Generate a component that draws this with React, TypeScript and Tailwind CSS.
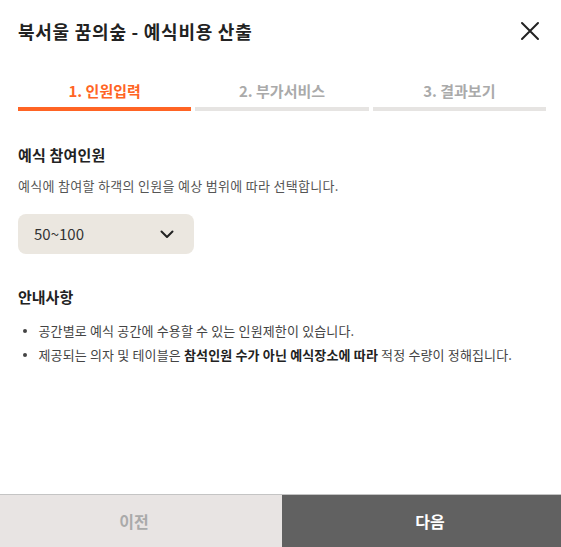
import React from "react";

export default function App() {
  const font = { fontFamily: '"Noto Sans CJK KR", "Noto Sans", sans-serif' };
  return (
    <div className="w-[561px] h-[547px] bg-white flex flex-col" style={font}>
      <div className="h-[62px] flex items-center justify-between pl-[18px] pr-[21px]">
        <h1 className="text-[18px] font-bold text-[#222] leading-none tracking-[0.75px]">북서울 꿈의숲 - 예식비용 산출</h1>
        <svg width="20" height="20" viewBox="0 0 20 20" fill="none" stroke="#222" strokeWidth="2" strokeLinecap="round">
          <path d="M2 2 L18 18 M18 2 L2 18" />
        </svg>
      </div>
      <div className="flex gap-[4px] pl-[18px] pr-[15px] pt-[19px]">
        {[
          ["1. 인원입력", true],
          ["2. 부가서비스", false],
          ["3. 결과보기", false],
        ].map(([label, active]) => (
          <div key={label as string} className="flex-1 flex flex-col items-center gap-[6px]">
            <span className={`text-[15px] leading-[20px] font-bold ${active ? "text-[#ff6424]" : "text-[#aaaaaa]"}`}>{label}</span>
            <div className={`w-full h-[4px] ${active ? "bg-[#ff6424]" : "bg-[#e6e4e2]"}`} />
          </div>
        ))}
      </div>
      <div className="px-[18px] pt-[33px] flex-1">
        <h2 className="text-[15px] font-bold text-[#222] leading-[22px] tracking-[0.2px]">예식 참여인원</h2>
        <p className="mt-[10px] text-[13px] text-[#555] leading-[20px] tracking-[0.3px]">예식에 참여할 하객의 인원을 예상 범위에 따라 선택합니다.</p>
        <div className="mt-[18px] w-[176px] h-[40px] rounded-[8px] bg-[#ebe7e0] flex items-center justify-between pl-[16px] pr-[20px]">
          <span className="text-[15px] text-[#333]">50~100</span>
          <svg width="14" height="9" viewBox="0 0 14 9" fill="none" stroke="#222" strokeWidth="2" strokeLinecap="round" strokeLinejoin="round">
            <path d="M1.5 1.5 L7 7 L12.5 1.5" />
          </svg>
        </div>
        <h2 className="mt-[32px] text-[15px] font-bold text-[#222] leading-[22px]">안내사항</h2>
        <ul className="mt-[13px] flex flex-col gap-[4px] text-[13px] text-[#444] leading-[20px] tracking-[0.15px]">
          <li className="flex items-center">
            <span className="w-[3.5px] h-[3.5px] rounded-full bg-[#444] ml-[5px] mr-[12px]" />
            공간별로 예식 공간에 수용할 수 있는 인원제한이 있습니다.
          </li>
          <li className="flex items-center">
            <span className="w-[3.5px] h-[3.5px] rounded-full bg-[#444] ml-[5px] mr-[12px]" />
            <span>
              제공되는 의자 및 테이블은 <b className="text-[#222]">참석인원 수가 아닌 예식장소에 따라</b> 적정 수량이 정해집니다.
            </span>
          </li>
        </ul>
      </div>
      <div className="flex h-[53px] border-t border-[#c4c4c4]">
        <button className="w-[282px] pr-[14px] bg-[#e8e4e3] text-[#aaaaaa] text-[16px] font-bold">이전</button>
        <button className="flex-1 pl-[17px] bg-[#616161] text-white text-[16px] font-bold">다음</button>
      </div>
    </div>
  );
}
